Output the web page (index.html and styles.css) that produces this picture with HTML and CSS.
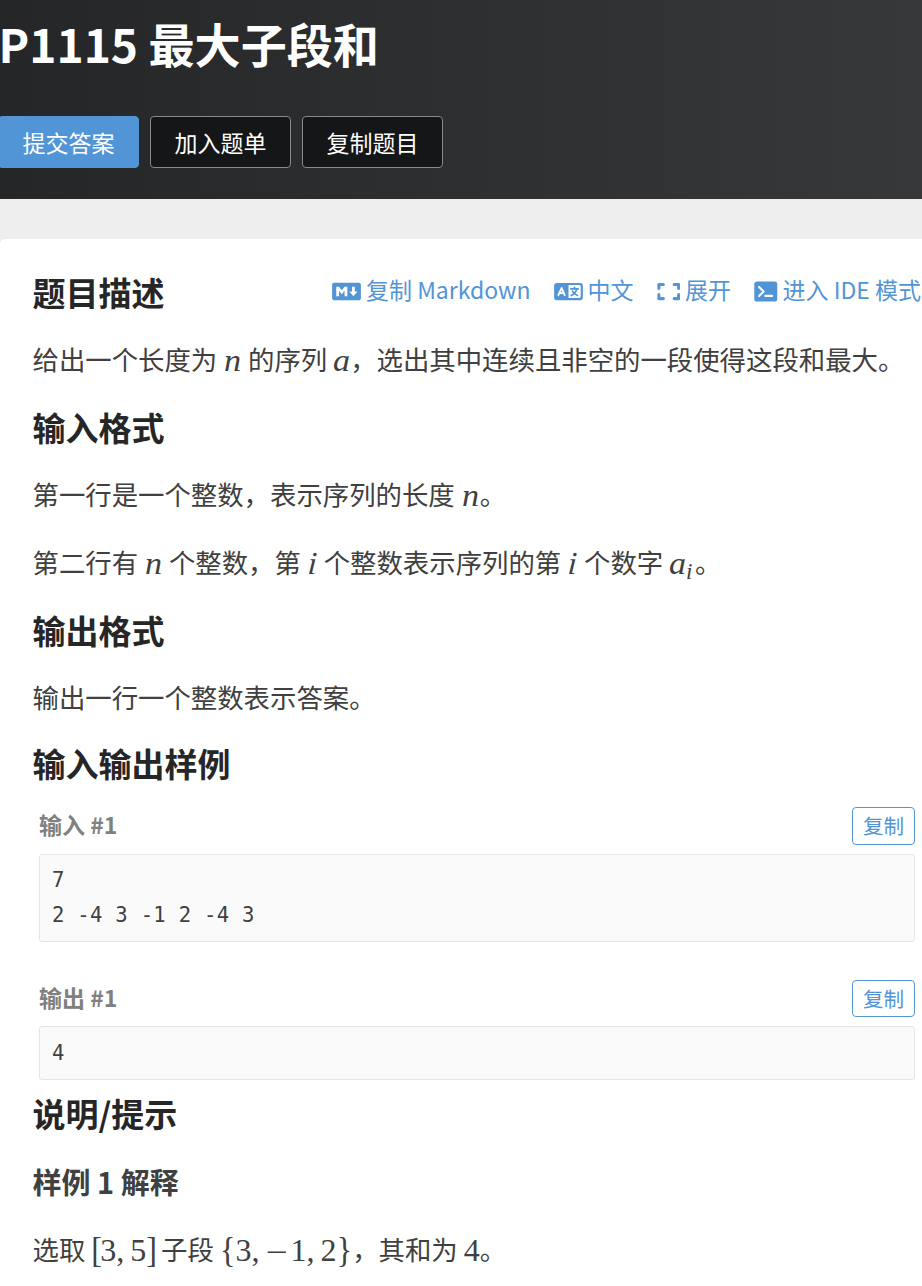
FILE: index.html
```html
<!DOCTYPE html>
<html lang="zh-CN">
<head>
<meta charset="utf-8">
<title>P1115 最大子段和</title>
<link rel="stylesheet" href="styles.css">
</head>
<body>
<header class="banner">
  <h1 class="title">P1115 最大子段和</h1>
  <div class="actions">
    <button class="btn primary">提交答案</button>
    <button class="btn">加入题单</button>
    <button class="btn">复制题目</button>
  </div>
</header>
<main class="card">
  <div class="head">
    <h2>题目描述</h2>
    <nav class="tools">
      <a class="tool"><svg class="icon wide" viewBox="0 0 640 512"><path fill="currentColor" d="M593.8 59.1H46.2C20.7 59.1 0 79.8 0 105.2v301.5c0 25.5 20.7 46.2 46.2 46.2h547.7c25.5 0 46.2-20.7 46.1-46.1V105.2c0-25.4-20.7-46.1-46.2-46.1zM338.5 360.6H277v-120l-61.5 76.9-61.5-76.9v120H92.3V151.4h61.5l61.5 76.9 61.5-76.9h61.5v209.2zm135.3 3.1L381.5 256H443V151.4h61.5V256H566z"/></svg>复制 Markdown</a>
      <a class="tool"><svg class="icon wide" viewBox="0 0 640 512"><rect y="64" width="640" height="384" rx="64" fill="currentColor"/><path fill="#fff" d="M320 112h240q32 0 32 32v224q0 32-32 32H320z"/><path fill="none" stroke="#fff" stroke-width="44" stroke-linecap="round" stroke-linejoin="round" d="M96 337l70-158 70 158M120 292h92"/><path fill="none" stroke="currentColor" stroke-width="38" stroke-linecap="round" d="M372 196h164M454 166v28M506 200c-18 70-60 112-124 146M408 246c20 46 58 78 112 98"/></svg>中文</a>
      <a class="tool"><svg class="icon" viewBox="0 0 512 512"><path fill="none" stroke="currentColor" stroke-width="68" stroke-linejoin="round" stroke-linecap="round" d="M136 98H36v88M376 98h100v88M36 326v88h100M476 326v88H376"/></svg>展开</a>
      <a class="tool"><svg class="icon" viewBox="0 0 512 512"><rect y="32" width="512" height="448" rx="64" fill="currentColor"/><path fill="none" stroke="#fff" stroke-width="46" stroke-linecap="round" stroke-linejoin="round" d="M108 158l100 98-100 98M246 354h152"/></svg>进入 IDE 模式</a>
    </nav>
  </div>
  <p class="text">给出一个长度为 <i class="m n">n</i> 的序列 <i class="m a">a</i>，选出其中连续且非空的一段使得这段和最大。</p>
  <h2>输入格式</h2>
  <p class="text">第一行是一个整数，表示序列的长度 <i class="m n">n</i>。</p>
  <p class="text last">第二行有 <i class="m n">n</i> 个整数，第 <i class="m i">i</i> 个整数表示序列的第 <i class="m i">i</i> 个数字 <i class="m a">a</i><i class="m sub">i</i>。</p>
  <h2>输出格式</h2>
  <p class="text output">输出一行一个整数表示答案。</p>
  <h2>输入输出样例</h2>
  <section class="sample">
    <div class="label"><span>输入 #1</span><button class="copy">复制</button></div>
    <pre class="code">7
2 -4 3 -1 2 -4 3</pre>
  </section>
  <section class="sample second">
    <div class="label"><span>输出 #1</span><button class="copy">复制</button></div>
    <pre class="code">4</pre>
  </section>
  <h2>说明/提示</h2>
  <h3>样例 1 解释</h3>
  <p class="text">选取 <span class="m"><span class="br">[</span>3<span class="c">,</span>5<span class="br">]</span></span> 子段 <span class="m"><span class="cb">{</span>3<span class="c">,</span><span class="minus">−</span>1<span class="c">,</span>2<span class="cb">}</span></span>，其和为 <span class="m">4</span>。</p>
</main>
</body>
</html>
```
FILE: styles.css
```css
* { box-sizing: border-box; }
body {
  margin: 0;
  min-height: 1286px;
  background: #eee;
  color: #404040;
  font-family: "Noto Sans CJK SC", sans-serif;
  font-size: 26.4px;
  overflow: hidden;
}
h1, h2, h3, p, pre { margin: 0; }
button { font-family: inherit; padding: 0; }
.banner {
  height: 199px;
  padding-top: 10px;
  background: linear-gradient(to right, #252628, #373839);
}
.title {
  margin-left: -1.5px;
  font-size: 46.1px;
  line-height: 66px;
  color: #fff;
  white-space: nowrap;
}
.actions {
  display: flex;
  gap: 11px;
  margin: 40px 0 0 -2px;
}
.btn {
  width: 141px;
  height: 52px;
  border: 1px solid #88898a;
  border-radius: 4px;
  background: #151617;
  color: #fff;
  font-size: 23px;
  line-height: 50px;
}
.btn.primary { background: #5295d6; border-color: #5295d6; }
.card {
  height: 1047px;
  margin-top: 40px;
  padding: 33px 0 0 32.5px;
  background: #fff;
  border-radius: 5px 0 0 0;
}
.head { display: flex; height: 40px; }
.tools {
  display: flex;
  gap: 23px;
  margin-left: auto;
  padding-right: 1px;
}
.tool {
  display: flex;
  align-items: center;
  gap: 5px;
  color: #5295d6;
  font-size: 23px;
  line-height: 35px;
  height: 35px;
  white-space: nowrap;
}
.icon { width: 23.5px; height: 23px; margin-top: 4px; }
.icon.wide { width: 29px; }
h2 {
  font-size: 33px;
  line-height: 40px;
  color: #262626;
}
h3 { font-size: 29px; line-height: 40px; margin-top: 28px; }
.text {
  height: 40px;
  line-height: 40px;
  margin: 27px 0 27.5px;
  white-space: nowrap;
}
.text + .text { margin-top: 28px; }
.text.last { margin-bottom: 28.5px; }
.text.output { margin-bottom: 25.5px; }
.m {
  display: inline-block;
  font-family: "Liberation Serif", serif;
  font-size: 32px;
  line-height: 0;
  transform: translateY(1px);
}
.n, .a { font-size: 31px; transform: translateY(1px) scaleX(1.1); }
.n { width: 19px; text-align: center; }
.a { width: 17px; text-align: center; }
.i { width: 11px; text-align: center; transform: translateY(1px) skewX(-4deg); }
.sub { font-size: 23px; width: 9px; transform: translateY(6px); }
.c { display: inline-block; width: 14px; }
.br, .cb { display: inline-block; text-align: center; transform: scaleY(1.1); }
.br { width: 9px; }
.cb { width: 15.7px; }
.minus { display: inline-block; width: 25px; text-align: center; transform: translate(-2px, 2px) scaleX(1.22); }
.sample { margin: 24px 7px 0 6.5px; }
.sample.second { margin-top: 38px; }
.label {
  display: flex;
  justify-content: space-between;
  height: 38px;
  font-size: 23px;
  font-weight: 700;
  line-height: 34px;
  color: #808080;
}
.copy {
  width: 63px;
  height: 38px;
  border: 1px solid #5295d6;
  border-radius: 4px;
  background: #fff;
  color: #5295d6;
  font-size: 20.5px;
  line-height: 34px;
  padding-bottom: 2px;
}
.code {
  margin-top: 9px;
  padding: 8px 12px;
  height: 88px;
  border: 1px solid #e6e6e6;
  border-radius: 3px;
  background: #fafafa;
  font-family: "DejaVu Sans Mono", monospace;
  font-size: 20.6px;
  letter-spacing: 0.27px;
  line-height: 35px;
}
.second .label { height: 37px; }
.second .copy { height: 37px; }
.second .code { height: 54px; margin-bottom: 13px; padding-top: 9px; }
h3 + .text { margin-top: 28px; }
```
